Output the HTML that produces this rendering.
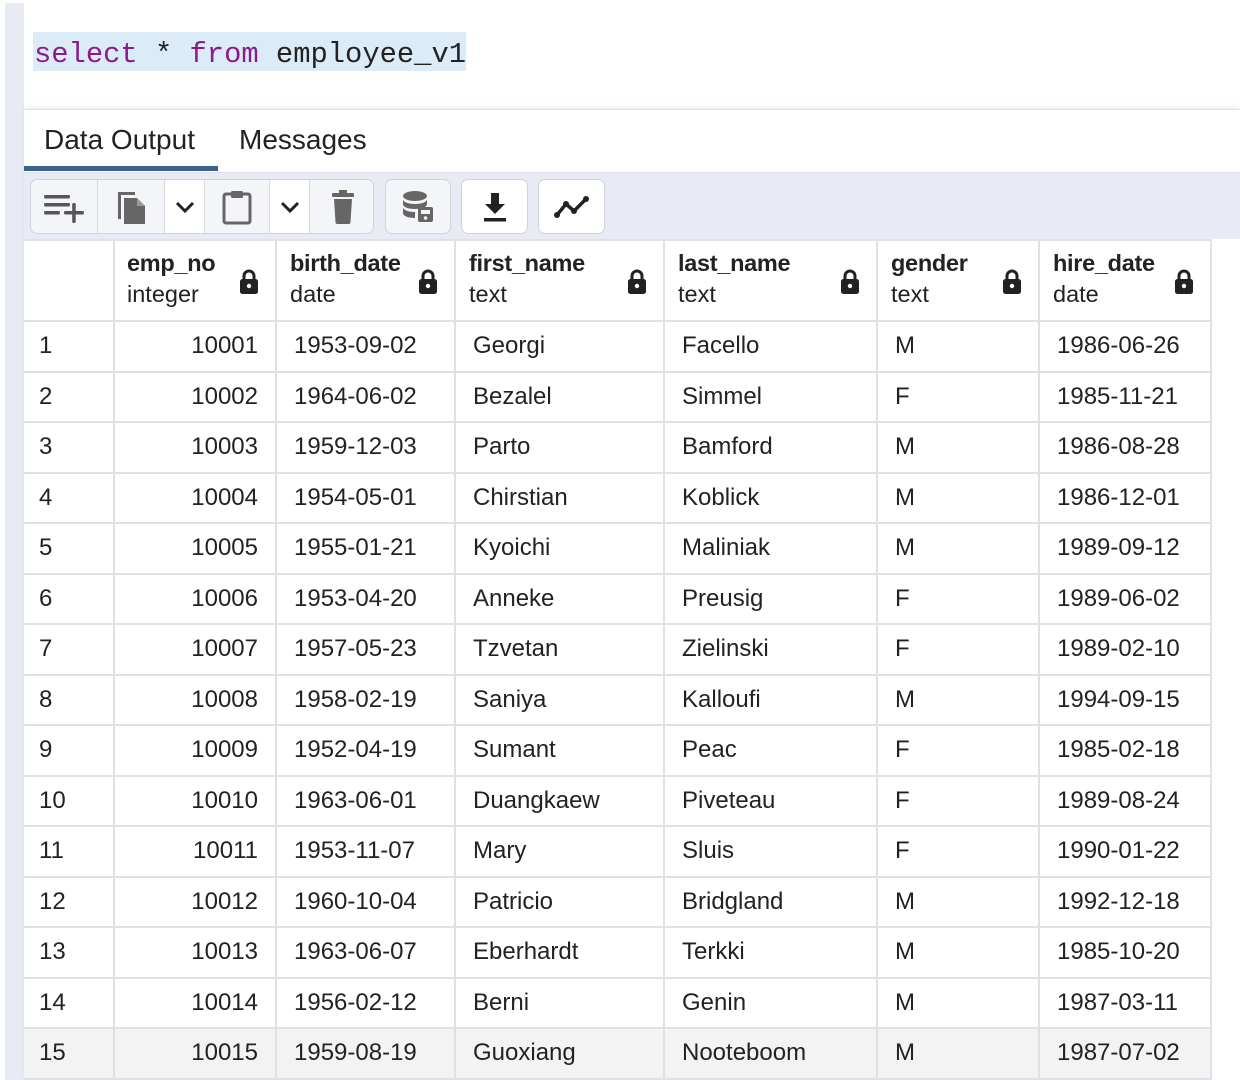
<!DOCTYPE html>
<html><head><meta charset="utf-8">
<style>
*{box-sizing:border-box;margin:0;padding:0}
html,body{width:1240px;height:1080px;overflow:hidden;background:#fff;font-family:"Liberation Sans",Arial,sans-serif;color:#222}
#gutter{position:absolute;left:5px;top:3px;width:19px;height:1077px;background:#e8ebf3}
#code{position:absolute;left:33px;top:32px;height:39px;width:433px;background:#dcebf8;font-family:"Liberation Mono",monospace;font-size:28.8px;line-height:39px;padding-top:3px;padding-left:1px;color:#222;white-space:pre;overflow:hidden}
.kw{color:#8b1a8b}
#panel{position:absolute;left:24px;top:109px;width:1216px;height:971px;background:#fff;border-top:1px solid #e2e2e2;box-shadow:0 -3px 5px rgba(0,0,0,.06)}
.tab{position:absolute;top:14px;font-size:28px;color:#222}
#uline{position:absolute;left:0;top:56px;width:194px;height:5px;background:#3b6089}
#toolbar{position:absolute;left:0;top:62px;width:1216px;height:67px;background:#e8ebf3;border-top:1px solid #dcdfe6}
.grp{position:absolute;top:6px;height:55px;border:1.5px solid #cfd3dc;border-radius:7px;background:#f4f5f8;overflow:hidden}
.btn{position:absolute;top:0;height:100%;display:flex;align-items:center;justify-content:center}
.sep{border-left:1.5px solid #d6d9e0}
.white{background:#fff}
table{position:absolute;left:0;top:129px;border-collapse:collapse;table-layout:fixed}
td{border:2px solid #dfe1e6;height:50.5px;font-size:24px;padding:0 17px;white-space:nowrap;position:relative}
tr.h td{height:81px;vertical-align:middle}
.hn{font-weight:bold;font-size:23.5px;line-height:32px;letter-spacing:-.3px;margin-top:-5px}
.ht{font-size:23.5px;line-height:30px}
.lock{position:absolute;right:16px;top:28px}
td.r{text-align:right}
td.n{padding-left:15px}
tr.last td{background:#f3f3f3}
</style></head><body>
<div id="gutter"></div>
<div id="code"><span class="kw">select</span> * <span class="kw">from</span> employee_v1</div>
<div id="panel">
 <div class="tab" style="left:20px">Data Output</div>
 <div class="tab" style="left:215px">Messages</div>
 <div id="uline"></div>
 <div id="toolbar">
  <div class="grp" style="left:6px;width:344px">
   <div class="btn" style="left:0;width:66px"><svg width="44" height="36" viewBox="0 0 44 36"><g fill="#555"><rect x="2" y="6" width="26" height="3.5" rx="1.5"/><rect x="2" y="14" width="26" height="3.5" rx="1.5"/><rect x="2" y="22" width="16" height="3.5" rx="1.5"/><rect x="22" y="22" width="20" height="3.5" rx="1.5"/><rect x="30.2" y="14" width="3.5" height="20" rx="1.5"/></g></svg></div>
   <div class="btn sep" style="left:66px;width:67px"><svg width="34" height="38" viewBox="0 0 34 38"><path d="M4 4h17v3H7v24H4z" fill="#666"/><path d="M10 10h13l8 8v18H10z" fill="#666"/><path d="M23 10v8h8" fill="#999"/></svg></div>
   <div class="btn sep white" style="left:133px;width:40px"><svg width="22" height="14" viewBox="0 0 22 14"><path d="M3 3l8 8 8-8" stroke="#222" stroke-width="3" fill="none"/></svg></div>
   <div class="btn sep" style="left:173px;width:65px"><svg width="32" height="38" viewBox="0 0 32 38"><rect x="3" y="6" width="26" height="29" rx="2" fill="none" stroke="#666" stroke-width="3"/><rect x="10" y="3" width="12" height="7" rx="1.5" fill="#666"/></svg></div>
   <div class="btn sep white" style="left:238px;width:40px"><svg width="22" height="14" viewBox="0 0 22 14"><path d="M3 3l8 8 8-8" stroke="#222" stroke-width="3" fill="none"/></svg></div>
   <div class="btn sep" style="left:278px;width:66px"><svg width="26" height="34" viewBox="0 0 26 34"><rect x="2" y="3" width="22" height="4" rx="1" fill="#666"/><rect x="9" y="0" width="8" height="4" fill="#666"/><path d="M4 9h18l-1.5 23a2 2 0 0 1-2 2h-11a2 2 0 0 1-2-2z" fill="#666"/></svg></div>
  </div>
  <div class="grp" style="left:361px;width:66px"><div class="btn" style="left:0;width:100%"><svg width="34" height="34" viewBox="0 0 34 34"><g fill="#666"><ellipse cx="14" cy="6" rx="12" ry="5"/><path d="M2 9c0 3 5 5 12 5s12-2 12-5v5c0 3-5 5-12 5S2 17 2 14z"/><path d="M2 17c0 3 5 5 12 5v6c-7 0-12-2-12-5z"/><rect x="17" y="17" width="15" height="15" rx="2"/></g><rect x="20" y="20" width="9" height="4" fill="#f4f5f8"/><circle cx="24.5" cy="28" r="1.8" fill="#f4f5f8"/></svg></div></div>
  <div class="grp white" style="left:437px;width:67px"><div class="btn" style="left:0;width:100%"><svg width="26" height="32" viewBox="0 0 26 32"><path d="M9 2h8v11h6L13 23 3 13h6z" fill="#222"/><rect x="2" y="27" width="22" height="3.5" fill="#222"/></svg></div></div>
  <div class="grp white" style="left:514px;width:67px"><div class="btn" style="left:0;width:100%"><svg width="38" height="26" viewBox="0 0 38 26"><path d="M4 21l9-11 8 7 12-12" stroke="#222" stroke-width="3.5" fill="none" stroke-linejoin="round"/><g fill="#222"><circle cx="4" cy="21" r="3"/><circle cx="13" cy="10" r="3"/><circle cx="21" cy="17" r="3"/><circle cx="33" cy="5" r="3"/></g></svg></div></div>
 </div>
 <table>
  <colgroup><col style="width:90px"><col style="width:162px"><col style="width:179px"><col style="width:209px"><col style="width:213px"><col style="width:162px"><col style="width:172px"></colgroup>
  <tr class="h"><td style="border-left:none"></td>
   <td style="padding-left:12px"><div class="hn">emp_no</div><div class="ht">integer</div><svg class="lock" width="20" height="26" viewBox="0 0 20 26"><path d="M5 11V7a5 5 0 0 1 10 0v4" stroke="#222" stroke-width="3" fill="none"/><rect x="1" y="10" width="18" height="15" rx="2.5" fill="#222"/><circle cx="10" cy="17" r="2.2" fill="#fff"/></svg></td>
   <td style="padding-left:13px"><div class="hn">birth_date</div><div class="ht">date</div><svg class="lock" width="20" height="26" viewBox="0 0 20 26"><path d="M5 11V7a5 5 0 0 1 10 0v4" stroke="#222" stroke-width="3" fill="none"/><rect x="1" y="10" width="18" height="15" rx="2.5" fill="#222"/><circle cx="10" cy="17" r="2.2" fill="#fff"/></svg></td>
   <td style="padding-left:13px"><div class="hn">first_name</div><div class="ht">text</div><svg class="lock" width="20" height="26" viewBox="0 0 20 26"><path d="M5 11V7a5 5 0 0 1 10 0v4" stroke="#222" stroke-width="3" fill="none"/><rect x="1" y="10" width="18" height="15" rx="2.5" fill="#222"/><circle cx="10" cy="17" r="2.2" fill="#fff"/></svg></td>
   <td style="padding-left:13px"><div class="hn">last_name</div><div class="ht">text</div><svg class="lock" width="20" height="26" viewBox="0 0 20 26"><path d="M5 11V7a5 5 0 0 1 10 0v4" stroke="#222" stroke-width="3" fill="none"/><rect x="1" y="10" width="18" height="15" rx="2.5" fill="#222"/><circle cx="10" cy="17" r="2.2" fill="#fff"/></svg></td>
   <td style="padding-left:13px"><div class="hn">gender</div><div class="ht">text</div><svg class="lock" width="20" height="26" viewBox="0 0 20 26"><path d="M5 11V7a5 5 0 0 1 10 0v4" stroke="#222" stroke-width="3" fill="none"/><rect x="1" y="10" width="18" height="15" rx="2.5" fill="#222"/><circle cx="10" cy="17" r="2.2" fill="#fff"/></svg></td>
   <td style="padding-left:13px"><div class="hn">hire_date</div><div class="ht">date</div><svg class="lock" width="20" height="26" viewBox="0 0 20 26"><path d="M5 11V7a5 5 0 0 1 10 0v4" stroke="#222" stroke-width="3" fill="none"/><rect x="1" y="10" width="18" height="15" rx="2.5" fill="#222"/><circle cx="10" cy="17" r="2.2" fill="#fff"/></svg></td>
  </tr>
  <tr><td class="n" style="border-left:none">1</td><td class="r">10001</td><td>1953-09-02</td><td>Georgi</td><td>Facello</td><td>M</td><td>1986-06-26</td></tr>
  <tr><td class="n" style="border-left:none">2</td><td class="r">10002</td><td>1964-06-02</td><td>Bezalel</td><td>Simmel</td><td>F</td><td>1985-11-21</td></tr>
  <tr><td class="n" style="border-left:none">3</td><td class="r">10003</td><td>1959-12-03</td><td>Parto</td><td>Bamford</td><td>M</td><td>1986-08-28</td></tr>
  <tr><td class="n" style="border-left:none">4</td><td class="r">10004</td><td>1954-05-01</td><td>Chirstian</td><td>Koblick</td><td>M</td><td>1986-12-01</td></tr>
  <tr><td class="n" style="border-left:none">5</td><td class="r">10005</td><td>1955-01-21</td><td>Kyoichi</td><td>Maliniak</td><td>M</td><td>1989-09-12</td></tr>
  <tr><td class="n" style="border-left:none">6</td><td class="r">10006</td><td>1953-04-20</td><td>Anneke</td><td>Preusig</td><td>F</td><td>1989-06-02</td></tr>
  <tr><td class="n" style="border-left:none">7</td><td class="r">10007</td><td>1957-05-23</td><td>Tzvetan</td><td>Zielinski</td><td>F</td><td>1989-02-10</td></tr>
  <tr><td class="n" style="border-left:none">8</td><td class="r">10008</td><td>1958-02-19</td><td>Saniya</td><td>Kalloufi</td><td>M</td><td>1994-09-15</td></tr>
  <tr><td class="n" style="border-left:none">9</td><td class="r">10009</td><td>1952-04-19</td><td>Sumant</td><td>Peac</td><td>F</td><td>1985-02-18</td></tr>
  <tr><td class="n" style="border-left:none">10</td><td class="r">10010</td><td>1963-06-01</td><td>Duangkaew</td><td>Piveteau</td><td>F</td><td>1989-08-24</td></tr>
  <tr><td class="n" style="border-left:none">11</td><td class="r">10011</td><td>1953-11-07</td><td>Mary</td><td>Sluis</td><td>F</td><td>1990-01-22</td></tr>
  <tr><td class="n" style="border-left:none">12</td><td class="r">10012</td><td>1960-10-04</td><td>Patricio</td><td>Bridgland</td><td>M</td><td>1992-12-18</td></tr>
  <tr><td class="n" style="border-left:none">13</td><td class="r">10013</td><td>1963-06-07</td><td>Eberhardt</td><td>Terkki</td><td>M</td><td>1985-10-20</td></tr>
  <tr><td class="n" style="border-left:none">14</td><td class="r">10014</td><td>1956-02-12</td><td>Berni</td><td>Genin</td><td>M</td><td>1987-03-11</td></tr>
  <tr class="last"><td class="n" style="border-left:none">15</td><td class="r">10015</td><td>1959-08-19</td><td>Guoxiang</td><td>Nooteboom</td><td>M</td><td>1987-07-02</td></tr>
 </table>
</div>
</body></html>
